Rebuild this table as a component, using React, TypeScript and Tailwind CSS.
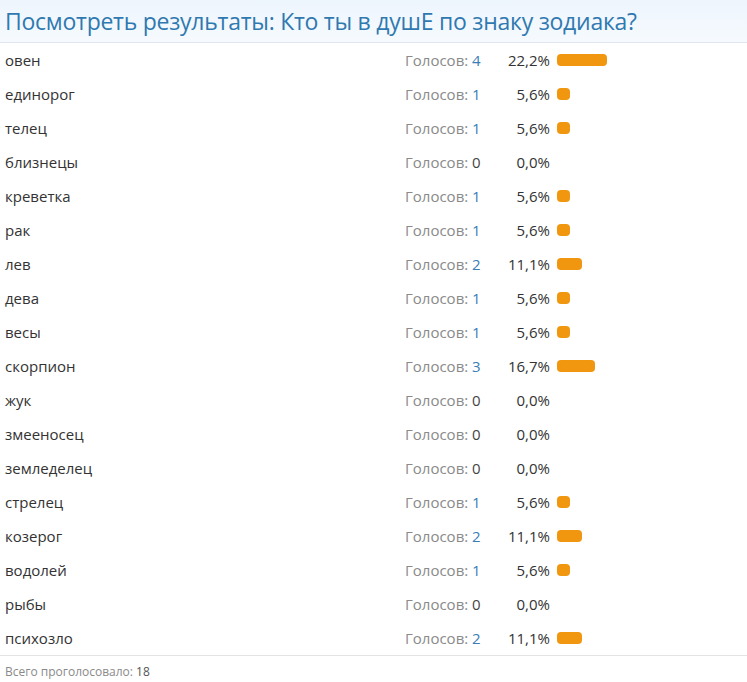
import React from 'react'

const rows: Array<{ name: string; votes: number; pct: string }> = [
  { name: 'овен', votes: 4, pct: '22,2' },
  { name: 'единорог', votes: 1, pct: '5,6' },
  { name: 'телец', votes: 1, pct: '5,6' },
  { name: 'близнецы', votes: 0, pct: '0,0' },
  { name: 'креветка', votes: 1, pct: '5,6' },
  { name: 'рак', votes: 1, pct: '5,6' },
  { name: 'лев', votes: 2, pct: '11,1' },
  { name: 'дева', votes: 1, pct: '5,6' },
  { name: 'весы', votes: 1, pct: '5,6' },
  { name: 'скорпион', votes: 3, pct: '16,7' },
  { name: 'жук', votes: 0, pct: '0,0' },
  { name: 'змееносец', votes: 0, pct: '0,0' },
  { name: 'земледелец', votes: 0, pct: '0,0' },
  { name: 'стрелец', votes: 1, pct: '5,6' },
  { name: 'козерог', votes: 2, pct: '11,1' },
  { name: 'водолей', votes: 1, pct: '5,6' },
  { name: 'рыбы', votes: 0, pct: '0,0' },
  { name: 'психозло', votes: 2, pct: '11,1' },
]

export default function App() {
  return (
    <div
      className="w-[747px] h-[682px] bg-white overflow-hidden"
      style={{ fontFamily: '"Open Sans", "Noto Sans", sans-serif' }}
    >
      {/* Заголовок */}
      <div className="h-[43px] border-b border-[#dfe6ee] bg-gradient-to-b from-[#edf5fd] to-[#f6fafe] flex items-center px-[5px]">
        <h1 className="text-[23px] tracking-[-0.25px] text-[#2f79b0] leading-none">
          Посмотреть результаты: Кто ты в душЕ по знаку зодиака?
        </h1>
      </div>

      {/* Результаты */}
      <div>
        {rows.map((r) => {
          const width = Math.round(parseFloat(r.pct.replace(',', '.')) * 2.25)
          return (
            <div key={r.name} className="h-[34px] grid grid-cols-[405px_100px_45px_1fr] items-center text-[15px]">
              <span className="pl-[5px] text-[#333]">{r.name}</span>
              <span className="text-[#8a8a8a]">
                Голосов:{' '}
                <span className={r.votes > 0 ? 'text-[#3a7db6]' : 'text-[#444]'}>{r.votes}</span>
              </span>
              <span className="text-right text-[#333]">{r.pct}%</span>
              <span className="pl-[7px] flex items-center">
                {r.votes > 0 && (
                  <span className="h-[12px] rounded-[4px] bg-[#f0960f]" style={{ width }} />
                )}
              </span>
            </div>
          )
        })}
      </div>

      {/* Итог */}
      <div className="border-t border-[#e3e3e3] px-[5px] pt-[7px] text-[12px] text-[#8a8a8a]">
        Всего проголосовало: <span className="text-[#555]">18</span>
      </div>
    </div>
  )
}
